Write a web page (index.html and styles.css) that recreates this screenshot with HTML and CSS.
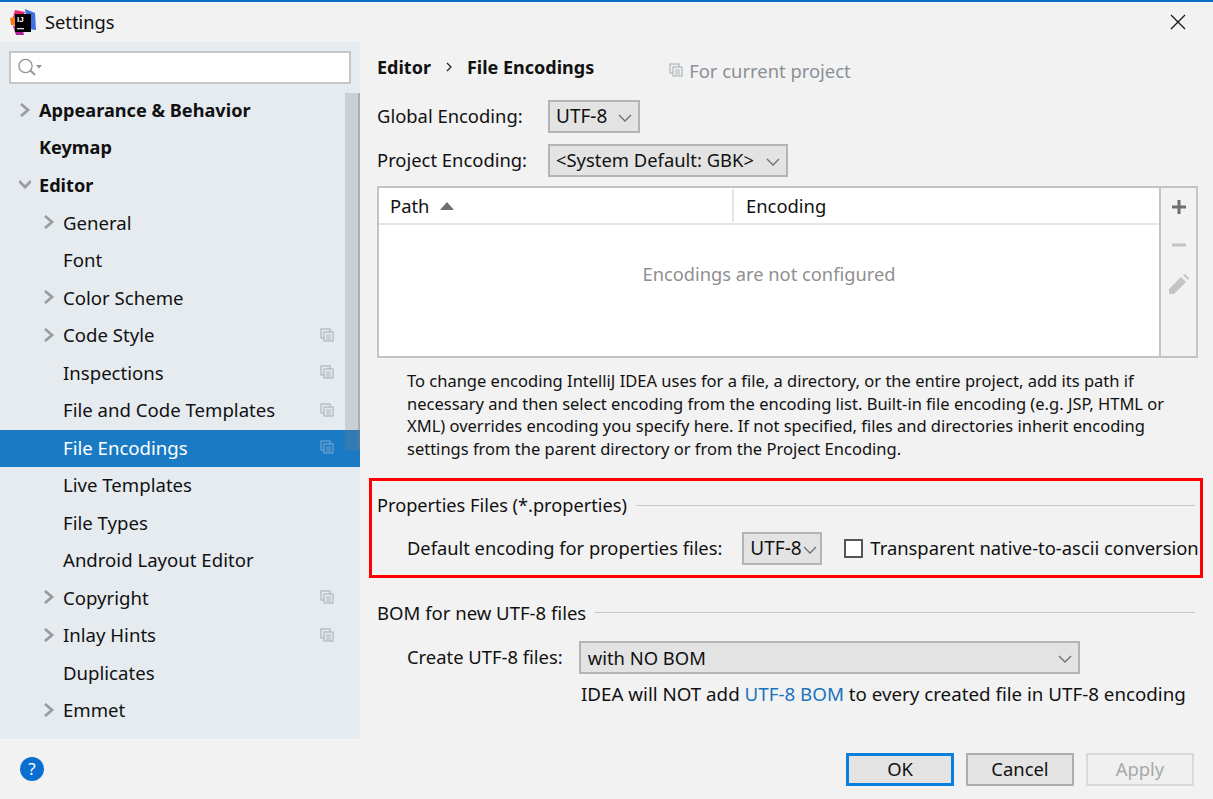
FILE: index.html
```html
<!DOCTYPE html>
<html>
<head>
  <title>Settings</title>
  <link rel="stylesheet" href="styles.css">
</head>
<body>
  <div class="ventana">
    <div class="titulo">
      <svg class="logo" width="26" height="26" viewBox="0 0 26 26">
        <path d="M5 1 L15 3 L10 14 L2 12 Z" fill="#f0246e"/>
        <path d="M15 0 L25 4 L26 21 L18 20 Z" fill="#3d6fe0"/>
        <path d="M0 9 L7 8 L7 17 L1 16 Z" fill="#f97a12"/>
        <path d="M3 17 L12 18 L14 26 L6 26 Z" fill="#b5219a"/>
        <rect x="5" y="5" width="16" height="18" fill="#000"/>
        <text x="7" y="13" class="logo-txt">IJ</text>
        <rect x="7" y="19" width="7" height="1.300" fill="#ddd"/>
      </svg>
      <span class="titulo-txt">Settings</span>
      <svg class="cerrar" width="16" height="16" viewBox="0 0 16 16"><path d="M1 1 L15 15 M15 1 L1 15" stroke="#111" stroke-width="1.200" fill="none"/></svg>
    </div>

    <div class="cuerpo">
      <div class="lateral">
        <div class="buscador">
          <svg width="26" height="20" viewBox="0 0 26 20"><circle cx="7.500" cy="8" r="6.600" fill="none" stroke="#8f9499" stroke-width="1.300"/><path d="M12.500 12.500 L17 17" stroke="#8f9499" stroke-width="1.800"/><path d="M18 7 H24 L21 10.500 Z" fill="#8f9499"/></svg>
        </div>
        <div class="arbol">
          <div class="fila fuerte"><svg class="flecha" viewBox="0 0 12 14"><path d="M2 1 L9 7 L2 13" /></svg>Appearance &amp; Behavior</div>
          <div class="fila fuerte"><span class="hueco"></span>Keymap</div>
          <div class="fila fuerte"><svg class="flecha" viewBox="0 0 12 14"><path d="M0 3 L6 9 L12 3" /></svg>Editor</div>
          <div class="fila nivel2"><svg class="flecha" viewBox="0 0 12 14"><path d="M2 1 L9 7 L2 13" /></svg>General</div>
          <div class="fila nivel2"><span class="hueco"></span>Font</div>
          <div class="fila nivel2"><svg class="flecha" viewBox="0 0 12 14"><path d="M2 1 L9 7 L2 13" /></svg>Color Scheme</div>
          <div class="fila nivel2"><svg class="flecha" viewBox="0 0 12 14"><path d="M2 1 L9 7 L2 13" /></svg>Code Style<svg class="copia" viewBox="0 0 14 14"><rect x="1" y="1" width="9" height="9"/><rect x="4" y="4" width="9" height="9"/><path d="M6 7 H11 M6 9 H11 M6 11 H11"/></svg></div>
          <div class="fila nivel2"><span class="hueco"></span>Inspections<svg class="copia" viewBox="0 0 14 14"><rect x="1" y="1" width="9" height="9"/><rect x="4" y="4" width="9" height="9"/><path d="M6 7 H11 M6 9 H11 M6 11 H11"/></svg></div>
          <div class="fila nivel2"><span class="hueco"></span>File and Code Templates<svg class="copia" viewBox="0 0 14 14"><rect x="1" y="1" width="9" height="9"/><rect x="4" y="4" width="9" height="9"/><path d="M6 7 H11 M6 9 H11 M6 11 H11"/></svg></div>
          <div class="fila nivel2 activa"><span class="hueco"></span>File Encodings<svg class="copia" viewBox="0 0 14 14"><rect x="1" y="1" width="9" height="9"/><rect x="4" y="4" width="9" height="9"/><path d="M6 7 H11 M6 9 H11 M6 11 H11"/></svg></div>
          <div class="fila nivel2"><span class="hueco"></span>Live Templates</div>
          <div class="fila nivel2"><span class="hueco"></span>File Types</div>
          <div class="fila nivel2"><span class="hueco"></span>Android Layout Editor</div>
          <div class="fila nivel2"><svg class="flecha" viewBox="0 0 12 14"><path d="M2 1 L9 7 L2 13" /></svg>Copyright<svg class="copia" viewBox="0 0 14 14"><rect x="1" y="1" width="9" height="9"/><rect x="4" y="4" width="9" height="9"/><path d="M6 7 H11 M6 9 H11 M6 11 H11"/></svg></div>
          <div class="fila nivel2"><svg class="flecha" viewBox="0 0 12 14"><path d="M2 1 L9 7 L2 13" /></svg>Inlay Hints<svg class="copia" viewBox="0 0 14 14"><rect x="1" y="1" width="9" height="9"/><rect x="4" y="4" width="9" height="9"/><path d="M6 7 H11 M6 9 H11 M6 11 H11"/></svg></div>
          <div class="fila nivel2"><span class="hueco"></span>Duplicates</div>
          <div class="fila nivel2"><svg class="flecha" viewBox="0 0 12 14"><path d="M2 1 L9 7 L2 13" /></svg>Emmet</div>
        </div>
        <div class="barra"></div>
      </div>

      <div class="panel">
        <div class="miga">
          <b>Editor</b>
          <svg class="miga-sep" width="8" height="12" viewBox="0 0 8 12"><path d="M2 2 L6 6 L2 10" fill="none" stroke="#222" stroke-width="1.200"/></svg>
          <b>File Encodings</b>
          <span class="proyecto"><svg class="copia" viewBox="0 0 14 14"><rect x="1" y="1" width="9" height="9"/><rect x="4" y="4" width="9" height="9"/><path d="M6 7 H11 M6 9 H11 M6 11 H11"/></svg>For current project</span>
        </div>

        <div class="campo">
          <label class="etq-ancha">Global Encoding:</label>
          <div class="combo combo-utf">UTF-8<svg class="v" viewBox="0 0 14 8"><path d="M1 1 L7 7 L13 1"/></svg></div>
        </div>
        <div class="campo campo2">
          <label class="etq-ancha">Project Encoding:</label>
          <div class="combo combo-gbk">&lt;System Default: GBK&gt;<svg class="v" viewBox="0 0 14 8"><path d="M1 1 L7 7 L13 1"/></svg></div>
        </div>

        <div class="tabla">
          <div class="tabla-izq">
            <div class="cabecera">
              <div class="col-path">Path<svg class="orden" width="14" height="8" viewBox="0 0 14 8"><path d="M7 0 L14 8 H0 Z" fill="#6e6e6e"/></svg></div>
              <div class="col-enc">Encoding</div>
            </div>
            <div class="vacio">Encodings are not configured</div>
          </div>
          <div class="herramientas">
            <svg width="18" height="18" viewBox="0 0 18 18"><path d="M9 2 V16 M2 9 H16" stroke="#6e6e6e" stroke-width="3"/></svg>
            <svg width="18" height="18" viewBox="0 0 18 18"><path d="M2 9 H16" stroke="#c4c4c4" stroke-width="3"/></svg>
            <svg width="22" height="22" viewBox="0 0 22 22"><path d="M1 20 V15 L13 3 L18 8 L6 20 Z M15 1 L17 0 L21 4 L20 6 Z" fill="#c4c4c4"/></svg>
          </div>
        </div>

        <p class="ayuda">To change encoding IntelliJ IDEA uses for a file, a directory, or the entire project, add its path if necessary and then select encoding from the encoding list. Built-in file encoding (e.g. JSP, HTML or XML) overrides encoding you specify here. If not specified, files and directories inherit encoding settings from the parent directory or from the Project Encoding.</p>

        <div class="marco">
          <div class="seccion">Properties Files (*.properties)<span class="raya"></span></div>
          <div class="campo sangria">
            <label>Default encoding for properties files:</label>
            <div class="combo combo-prop">UTF-8<svg class="v" viewBox="0 0 14 8"><path d="M1 1 L7 7 L13 1"/></svg></div>
            <span class="check"></span>
            <span class="check-txt">Transparent native-to-ascii conversion</span>
          </div>
        </div>

        <div class="seccion seccion-bom">BOM for new UTF-8 files<span class="raya"></span></div>
        <div class="campo sangria campo-bom">
          <label>Create UTF-8 files:</label>
          <div class="combo combo-bom">with NO BOM<svg class="v" viewBox="0 0 14 8"><path d="M1 1 L7 7 L13 1"/></svg></div>
        </div>
        <div class="nota">IDEA will NOT add <a class="enlace">UTF-8 BOM</a> to every created file in UTF-8 encoding</div>
      </div>
    </div>

    <div class="pie">
      <span class="help">?</span>
      <div class="botones">
        <div class="boton ok">OK</div>
        <div class="boton">Cancel</div>
        <div class="boton off">Apply</div>
      </div>
    </div>
  </div>
</body>
</html>
```

FILE: styles.css
```css
html, body {
  margin: 0;
  padding: 0;
}

body {
  font-family: "Noto Sans", "Open Sans", sans-serif;
  font-size: 18.400px;
  color: #111;
  background-color: #f2f2f2;
}

.ventana {
  width: 1213px;
  height: 799px;
  overflow: hidden;
  display: flex;
  flex-direction: column;
}

/* barra de titulo */
.titulo {
  height: 40px;
  border-top: 2px solid #0a6fc4;
  display: flex;
  align-items: center;
  padding: 0 27px 0 10px;
  background-color: #f2f2f2;
}

.logo {
  margin-right: 9px;
}

.logo-txt {
  font-family: "Liberation Sans", sans-serif;
  font-size: 8px;
  font-weight: bold;
  fill: #fff;
}

.titulo-txt {
  font-size: 18.300px;
  flex: 1;
  padding-bottom: 2px;
}

/* cuerpo */
.cuerpo {
  height: 697px;
  display: flex;
}

.lateral {
  position: relative;
  width: 360px;
  flex: none;
  background-color: #e6ebf0;
  overflow: hidden;
}

.buscador {
  width: 342px;
  height: 33px;
  margin: 9px 9px 0 9px;
  border: 2px solid #c4c6c8;
  background-color: #fff;
  display: flex;
  align-items: center;
  padding-left: 7px;
  box-sizing: border-box;
}

.arbol {
  margin-top: 8px;
}

.fila {
  height: 37.5px;
  display: flex;
  align-items: center;
  padding-left: 19px;
  padding-bottom: 2px;
  box-sizing: border-box;
  white-space: nowrap;
}

.fuerte {
  font-weight: bold;
  font-size: 18.150px;
}

.nivel2 {
  padding-left: 43px;
  font-size: 18.600px;
}

.flecha {
  width: 12px;
  height: 14px;
  margin-right: 8px;
  flex: none;
}

.flecha path {
  fill: none;
  stroke: #9a9da0;
  stroke-width: 2.800;
}

.hueco {
  width: 20px;
  flex: none;
}

.copia {
  width: 14px;
  height: 14px;
  flex: none;
}

.copia rect {
  fill: #e6ebf0;
  stroke: #aeb6bb;
  stroke-width: 1.200;
}

.copia path {
  stroke: #aeb6bb;
  stroke-width: 1;
  fill: none;
}

.fila .copia {
  margin-left: auto;
  margin-right: 26px;
}

.activa {
  background-color: #1a7bc4;
  color: #fff;
}

.activa .copia rect {
  fill: #1a7bc4;
  stroke: #6fa5cd;
}

.activa .copia path {
  stroke: #6fa5cd;
}

.barra {
  position: absolute;
  top: 51px;
  right: 0;
  width: 15px;
  height: 357px;
  box-sizing: border-box;
  border-right: 2px solid rgba(120, 125, 130, 0.4);
  background-color: rgba(120, 125, 130, 0.25);
}

/* panel derecho */
.panel {
  flex: 1;
  min-width: 0;
  padding: 0 15px 0 17px;
  position: relative;
}

.miga {
  height: 50px;
  display: flex;
  align-items: center;
}

.miga b {
  font-weight: bold;
  font-size: 18px;
}

.miga-sep {
  margin: 0 14px 0 14px;
}

.proyecto {
  display: flex;
  align-items: center;
  margin: 6px 0 0 75px;
  color: #8a9096;
}

.proyecto .copia {
  margin-right: 6px;
}

.proyecto .copia rect {
  fill: #f2f2f2;
}

.campo {
  display: flex;
  align-items: center;
  height: 33px;
  margin-top: 8px;
  white-space: nowrap;
}

.campo label,
.check-txt,
.combo {
  padding-bottom: 2px;
}

.campo2 {
  margin-top: 11px;
}

.etq-ancha {
  width: 171px;
  flex: none;
}

.combo {
  height: 33px;
  box-sizing: border-box;
  border: 2px solid #b4b4b4;
  background-color: #e3e3e3;
  display: flex;
  align-items: center;
  padding-left: 6px;
  flex: none;
  position: relative;
}

.v {
  position: absolute;
  right: 6px;
  top: 12px;
  width: 14px;
  height: 8px;
}

.v path {
  fill: none;
  stroke: #6e6e6e;
  stroke-width: 1.300;
}

.combo-utf {
  width: 92px;
  font-size: 19px;
}

.combo-gbk {
  width: 240px;
}

.combo-prop {
  width: 80px;
  margin-left: 20px;
  font-size: 19px;
}

.combo-prop .v {
  right: 3px;
}

.combo-bom {
  width: 501px;
  margin-left: 16px;
  padding-left: 7px;
  padding-bottom: 0;
}

/* tabla */
.tabla {
  margin-top: 9px;
  width: 821px;
  height: 172px;
  box-sizing: border-box;
  border: 2px solid #c4c4c4;
  display: flex;
}

.tabla-izq {
  flex: 1;
  min-width: 0;
  background-color: #fff;
  display: flex;
  flex-direction: column;
}

.cabecera {
  height: 37px;
  box-sizing: border-box;
  border-bottom: 2px solid #e4e4e4;
  display: flex;
  align-items: center;
}

.col-path {
  width: 355px;
  height: 33px;
  display: flex;
  align-items: center;
  padding-left: 11px;
  box-sizing: border-box;
  border-right: 2px solid #e4e4e4;
}

.orden {
  margin-left: 11px;
}

.col-enc {
  padding-left: 12px;
}

.vacio {
  text-align: center;
  color: #8f8f8f;
  margin-top: 36px;
  font-size: 18.300px;
}

.herramientas {
  width: 37px;
  flex: none;
  border-left: 2px solid #c4c4c4;
  display: flex;
  flex-direction: column;
  align-items: center;
  gap: 20px;
  padding-top: 10px;
  box-sizing: border-box;
}

.ayuda {
  margin: 12px 0 0 30px;
  width: 770px;
  font-size: 16.500px;
  line-height: 22.500px;
}

/* recuadro rojo */
.marco {
  position: relative;
  margin: 18px 0 0 -8px;
  width: 834px;
  height: 100px;
  box-sizing: border-box;
  border: 3px solid #f00;
  padding-left: 5px;
  font-size: 18.200px;
}

.seccion {
  display: flex;
  align-items: center;
  height: 26px;
  margin-top: 11px;
  white-space: nowrap;
}

.raya {
  flex: 1;
  height: 1px;
  background-color: #c9c9c9;
  margin-left: 9px;
  margin-right: 5px;
}

.sangria {
  margin-left: 30px;
}

.marco .campo {
  margin-top: 14px;
}

.marco label {
  font-size: 18.300px;
}

.check {
  width: 19px;
  height: 19px;
  box-sizing: border-box;
  border: 2px solid #555;
  background-color: #fff;
  margin: 0 7px 0 22px;
  flex: none;
}

.check-txt {
  white-space: nowrap;
  font-size: 18.400px;
}

.seccion-bom {
  margin-top: 21px;
  font-size: 18.550px;
}

.seccion-bom .raya {
  margin-right: 3px;
}

.campo-bom {
  margin-top: 16px;
}

.nota {
  margin: 7px 0 0 204px;
  white-space: nowrap;
  font-size: 18.750px;
}

.enlace {
  color: #1a73bd;
}

/* pie */
.pie {
  height: 60px;
  display: flex;
  align-items: center;
  justify-content: space-between;
  padding: 0 19px 0 20px;
  background-color: #f2f2f2;
}

.help {
  width: 24px;
  height: 24px;
  border-radius: 50%;
  background-color: #0a6fd0;
  color: #fff;
  font-size: 17px;
  line-height: 24px;
  text-align: center;
}

.botones {
  display: flex;
  gap: 12px;
}

.boton {
  width: 108px;
  height: 33px;
  box-sizing: border-box;
  border: 2px solid #adadad;
  background-color: #e3e3e3;
  display: flex;
  align-items: center;
  justify-content: center;
  padding-bottom: 2px;
}

.ok {
  border: 3px solid #0a7fdc;
}

.off {
  background-color: #f0f0f0;
  border-color: #d9d9d9;
  color: #a8a8a8;
}
```
